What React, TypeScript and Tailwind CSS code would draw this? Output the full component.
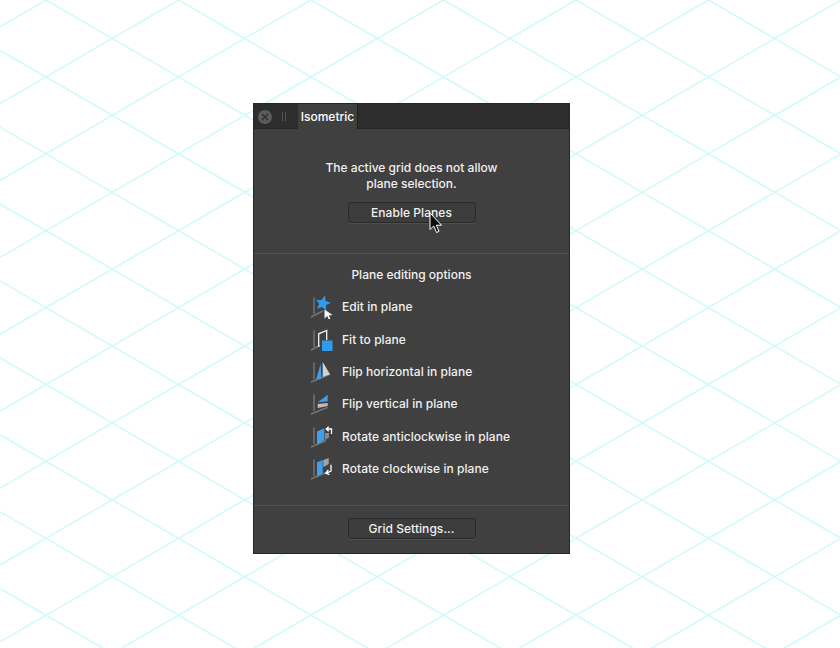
const font = "font-['Inter','Liberation_Sans',sans-serif]";

const GRID_W = 132.5;
const GRID_H = 76.9;

const IsoGrid = () => {
  const lines: React.ReactNode[] = [];
  // one family per direction, same intercept step, slope taken from the lattice
  const slope = GRID_H / GRID_W;
  for (let k = -12; k < 16; k++) {
    const y0 = k * GRID_H;
    lines.push(<line key={`d${k}`} x1={0} y1={y0 - 46 * slope} x2={840} y2={y0 + (840 - 46) * slope} />);
    lines.push(<line key={`u${k}`} x1={0} y1={y0 + 46 * slope} x2={840} y2={y0 - (840 - 46) * slope} />);
  }
  return (
    <svg className="absolute inset-0" width={840} height={648} fill="none" stroke="#d2fafa" strokeWidth={1.6}>
      {lines}
    </svg>
  );
};

const Plane = ({ x2 = 13, y2 = 16 }: { x2?: number; y2?: number }) => (
  <g stroke="#767676" strokeWidth={1.4} fill="none">
    <path d="M4 2.500V19" />
    <path d={`M1 22L${x2} ${y2}`} />
  </g>
);

const EditIcon = () => (
  <>
    <Plane />
    <path d="M15 0.500l.6 5.600 5.100 1.600-4.800 2.500.3 5.400-4-3.600-5.200 1.700 2.200-5L6 4.700l5.300.6z" fill="#2f9bec" />
    <path d="M14.500 14.500l8 5.500-3.600.4 1.500 3.300-1.700.7-1.500-3.300-2.700 2.400z" fill="#f6f6f6" />
  </>
);

const FitIcon = () => (
  <>
    <Plane x2={10} y2={17.500} />
    <path d="M8.700 19V5.800l8-3.300V12" fill="none" stroke="#f2f2f2" strokeWidth={1.3} />
    <rect x={12} y={12.500} width={10.500} height={10.500} rx={0.5} fill="#2f9bec" />
  </>
);

const FlipHIcon = () => (
  <>
    <Plane x2={20} y2={14.300} />
    <path d="M10.700 3.700L6 19.700l5.300-1.400z" fill="#3f9fec" />
    <path d="M12.700 2v15l7.300-2.700z" fill="#d2d2d2" />
  </>
);

const FlipVIcon = () => (
  <>
    <Plane x2={17.700} y2={15.300} />
    <path d="M7.700 10.300L17.700 2.700v6.600z" fill="#3f9fec" />
    <path d="M7.700 12l10-1v3L7.700 16z" fill="#c8b8bf" />
  </>
);

const RotateLeftIcon = () => (
  <>
    <Plane x2={16} y2={15.500} />
    <path d="M7 6.500l7.300-3.300V15L7 19.800z" fill="#3f9fec" />
    <path d="M15 8V15L19 12.500V8z" fill="#8a8a8a" />
    <path d="M21.500 9V4H16.500M18.700 1.800L16.300 4l2.400 2.200" fill="none" stroke="#fff" strokeWidth={1.3} />
  </>
);

const RotateRightIcon = () => (
  <>
    <Plane x2={16} y2={15.500} />
    <path d="M7 5.300L12.700 3V16.300L7 19.700z" fill="#3f9fec" />
    <path d="M13.300 3l5.400-2V7l-5.400 3.300z" fill="#a4a4a4" />
    <path d="M21 7.700V14L16 16.300M18.300 12.800l-2.500 3.500 3.600 1.400" fill="none" stroke="#fff" strokeWidth={1.3} />
  </>
);

const options = [
  { label: 'Edit in plane', Icon: EditIcon },
  { label: 'Fit to plane', Icon: FitIcon },
  { label: 'Flip horizontal in plane', Icon: FlipHIcon },
  { label: 'Flip vertical in plane', Icon: FlipVIcon },
  { label: 'Rotate anticlockwise in plane', Icon: RotateLeftIcon },
  { label: 'Rotate clockwise in plane', Icon: RotateRightIcon },
];

const PanelButton = ({ label, children }: { label: string; children?: React.ReactNode }) => (
  <div className="relative mx-auto flex h-[21px] w-[128px] items-center justify-center rounded-[3px] border border-[#2a2a2a] bg-[#3c3c3c] text-[12px] font-medium tracking-[0.05px] text-[#f0f0f0] shadow-[0_1px_0_#4f4f4f]">
    {label}
    {children}
  </div>
);

const Pointer = () => (
  <svg className="absolute left-[79px] top-[8px]" width={16} height={24} viewBox="0 0 16 24">
    <path
      d="M2 2V18.500L5.800 15 8.500 21.500 11 20.400 8.400 14.200H13.500z"
      fill="#0c0c0c"
      stroke="#fff"
      strokeWidth={1}
      strokeLinejoin="round"
    />
  </svg>
);

export default function App() {
  return (
    <div className={`relative h-[648px] w-[840px] overflow-hidden bg-white ${font}`}>
      <IsoGrid />
      <div className="relative pl-[253px] pt-[103px]">
        <div className="flex h-[451px] w-[317px] flex-col border border-[#262626] bg-[#404040] text-[#f0f0f0]">
          <div className="flex h-[25px] shrink-0 items-stretch bg-[#2d2d2d] shadow-[inset_0_-1px_0_#262626]">
            <div className="flex w-[44px] items-center">
              <span className="ml-[4px] flex h-[14px] w-[14px] items-center justify-center rounded-full bg-[#5c5c5c]">
                <svg width={8} height={8} viewBox="0 0 8 8" stroke="#2e2e2e" strokeWidth={1.4}>
                  <path d="M1 1l6 6M7 1L1 7" />
                </svg>
              </span>
              <span className="ml-[10px] h-[9px] w-[4px] border-x border-[#555]" />
            </div>
            <div className="flex w-[60px] items-center justify-center border-r border-[#1f1f1f] bg-[#404040] text-[12px] font-medium text-white">
              Isometric
            </div>
          </div>

          <div className="h-[125px] shrink-0 border-b border-[#525252] pt-[31px] text-center">
            <p className="text-[12px] font-medium leading-[16px]">
              The active grid does not allow
              <br />
              plane selection.
            </p>
            <div className="mt-[10px]">
              <PanelButton label="Enable Planes">
                <Pointer />
              </PanelButton>
            </div>
          </div>

          <div className="flex-1 border-b border-[#525252] pt-[13px]">
            <p className="text-center text-[12px] font-medium leading-[16px]">Plane editing options</p>
            <ul className="mt-[8px] flex flex-col pl-[56px]">
              {options.map(({ label, Icon }) => (
                <li key={label} className="flex h-[32.4px] items-center gap-[8px] text-[12px] font-medium tracking-[0.05px]">
                  <svg width={24} height={24} viewBox="0 0 24 24" className="shrink-0">
                    <Icon />
                  </svg>
                  {label}
                </li>
              ))}
            </ul>
          </div>

          <div className="h-[47px] shrink-0 pt-[12px]">
            <PanelButton label="Grid Settings..." />
          </div>
        </div>
      </div>
    </div>
  );
}
